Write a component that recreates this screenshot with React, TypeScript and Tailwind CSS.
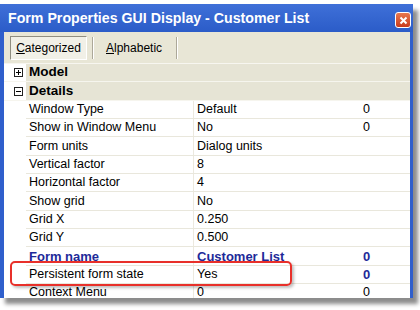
const rows = [
  { name: 'Window Type', value: 'Default', extra: '0' },
  { name: 'Show in Window Menu', value: 'No', extra: '0' },
  { name: 'Form units', value: 'Dialog units', extra: '', tall: true },
  { name: 'Vertical factor', value: '8', extra: '' },
  { name: 'Horizontal factor', value: '4', extra: '' },
  { name: 'Show grid', value: 'No', extra: '', tall: true },
  { name: 'Grid X', value: '0.250', extra: '' },
  { name: 'Grid Y', value: '0.500', extra: '' },
  { name: 'Form name', value: 'Customer List', extra: '0', bold: true, tall: true },
  { name: 'Persistent form state', value: 'Yes', extra: '0', boldExtra: true },
  { name: 'Context Menu', value: '0', extra: '0' },
];

function ExpandBox({ open }: { open: boolean }) {
  return (
    <svg width="9" height="9" viewBox="0 0 9 9" className="block">
      <rect x="0.5" y="0.5" width="8" height="8" fill="white" stroke="#222" />
      <line x1="2" y1="4.5" x2="7" y2="4.5" stroke="#000" />
      {!open && <line x1="4.5" y1="2" x2="4.5" y2="7" stroke="#000" />}
    </svg>
  );
}

function CategoryRow({ label, open, tall }: { label: string; open: boolean; tall?: boolean }) {
  return (
    <div className={`flex shrink-0 border-b border-[#f6f5ee] ${tall ? 'h-[19px]' : 'h-[18px]'}`}>
      <div className="w-[22px] bg-white flex items-center pl-[10px]">
        <ExpandBox open={open} />
      </div>
      <div className="flex-1 bg-[#e6e4d5] flex items-center pl-[3px] text-[13.5px] font-bold text-black">
        {label}
      </div>
    </div>
  );
}

export default function App() {
  return (
    <div className="relative w-[420px] h-[310px] bg-white overflow-hidden font-['Liberation_Sans',Arial,sans-serif]">
      <div className="mt-[4px] w-[413px] h-[294px] flex flex-col bg-[#2f5fcc] shadow-[5px_6px_4px_rgba(0,0,0,0.45)]">
        {/* title bar */}
        <div className="h-[28px] shrink-0 flex items-center bg-gradient-to-b from-[#3f70d8] to-[#2b5cc8] pl-[8px] pr-[2px]">
          <span className="flex-1 text-white font-bold text-[14.2px] leading-none">
            Form Properties GUI Display - Customer List
          </span>
          <div className="w-[16px] h-[16px] mt-[4px] rounded-[3px] border border-white bg-gradient-to-b from-[#e9784f] to-[#c8391a] flex items-center justify-center">
            <svg width="9" height="9" viewBox="0 0 9 9">
              <path d="M1.5 1.5 L7.5 7.5 M7.5 1.5 L1.5 7.5" stroke="white" strokeWidth="2" />
            </svg>
          </div>
        </div>

        {/* body */}
        <div className="flex-1 flex flex-col ml-[4px] mr-[3px] bg-[#e8e6d6] overflow-hidden">
          {/* toolbar */}
          <div className="h-[32px] shrink-0 flex items-center pl-[6px] border-b border-[#f7f6f0]">
            <div className="h-[24px] w-[77px] flex items-center justify-center border border-t-[#8f8d80] border-l-[#8f8d80] border-r-white border-b-white bg-[#f1f0e7] text-[12px] text-black">
              <span><span className="underline">C</span>ategorized</span>
            </div>
            <div className="ml-[5px] h-[22px] w-[2px] border-l border-[#aca899] border-r border-r-white" />
            <div className="ml-[12px] w-[70px] text-[12px] text-black">
              <span className="underline">A</span>lphabetic
            </div>
            <div className="h-[22px] w-[2px] border-l border-[#aca899] border-r border-r-white" />
          </div>

          {/* grid */}
          <div className="flex-1 flex flex-col bg-white overflow-hidden">
            <CategoryRow label="Model" open={false} />
            <CategoryRow label="Details" open={true} tall />
            {rows.map((r) => (
              <div
                key={r.name}
                className={`flex shrink-0 text-[12.5px] leading-none ${r.tall ? 'h-[19px]' : 'h-[18px]'}`}
              >
                <div className="w-[22px] bg-white" />
                <div className="flex-1 flex border-b border-[#e9e7dc]">
                  <div
                    className={`w-[168px] flex items-center pl-[3px] border-r border-[#ece9df] ${
                      r.bold ? 'font-bold text-[#1d2a99] text-[13px]' : 'text-black'
                    }`}
                  >
                    {r.name}
                  </div>
                  <div
                    className={`w-[166px] flex items-center pl-[3px] ${
                      r.bold ? 'font-bold text-[#1d2a99] text-[13px]' : 'text-black'
                    }`}
                  >
                    {r.value}
                  </div>
                  <div
                    className={`flex-1 flex items-center pl-[3px] ${
                      r.bold || r.boldExtra ? 'font-bold text-[#1d2a99] text-[13px]' : 'text-black'
                    }`}
                  >
                    {r.extra}
                  </div>
                </div>
              </div>
            ))}
          </div>
        </div>
      </div>

      {/* highlight */}
      <div className="absolute left-[10px] top-[261px] w-[282px] h-[25px] border-2 border-[#e8302a] rounded-[5px] shadow-[2px_2px_3px_rgba(0,0,0,0.25)]" />
    </div>
  );
}
